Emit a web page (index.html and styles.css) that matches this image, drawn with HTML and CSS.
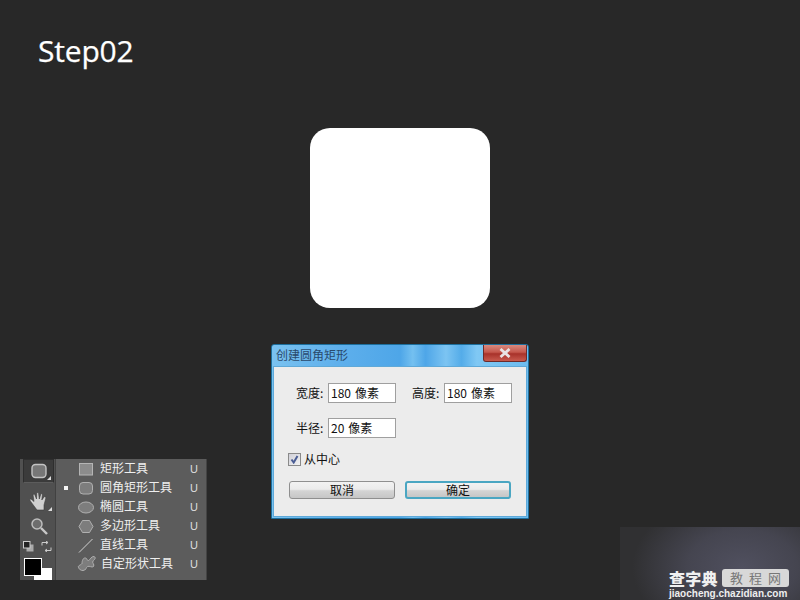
FILE: index.html
```html
<!DOCTYPE html>
<html lang="zh">
<head>
<meta charset="utf-8">
<title>Step02</title>
<link rel="stylesheet" href="styles.css">
</head>
<body>
<main class="canvas">
  <h1 class="step">Step02</h1>
  <div class="rounded"></div>

  <section class="dialog">
    <header class="titlebar">
      <span class="title">创建圆角矩形</span>
      <span class="close"><svg width="12" height="10" viewBox="0 0 12 10"><path d="M1.500 1L10.500 9M10.500 1L1.500 9" stroke="#e8e4e4" stroke-width="2.800" fill="none"/></svg></span>
    </header>
    <div class="body">
      <div class="row">
        <label class="lbl">宽度:</label><span class="input">180 像素</span>
        <label class="lbl lbl2">高度:</label><span class="input">180 像素</span>
      </div>
      <div class="row row-r">
        <label class="lbl">半径:</label><span class="input">20 像素</span>
      </div>
      <div class="check">
        <span class="box"><svg width="9" height="9" viewBox="0 0 9 9"><path d="M1.500 4.500L3.700 7.500L7.500 1" stroke="#4a5d94" stroke-width="2" fill="none"/></svg></span>
        <span>从中心</span>
      </div>
      <div class="buttons">
        <span class="btn">取消</span>
        <span class="btn btn-main">确定</span>
      </div>
    </div>
  </section>

  <section class="tools">
    <div class="toolbar">
      <div class="tool tool-active">
        <svg width="18" height="16" viewBox="0 0 18 16"><rect x="2" y="1.500" width="14" height="13" rx="3.500" fill="#777" stroke="#c4c4c4" stroke-width="1.400"/></svg>
        <i class="corner"></i>
      </div>
      <div class="tool tool-hand">
        <svg width="22" height="21" viewBox="0 0 22 21"><path d="M9 20L3 12L1.500 9.500L3 9L6 11.500L5 4.500L6.500 4L8.500 9L8.800 2.500L10.500 2.500L11.300 9L13 3.500L14.500 4L13.800 10L16.500 6.500L18 7.500L16 15V20Z" fill="#cfcfcf" stroke="#3a3a3a" stroke-width=".6"/></svg>
        <i class="corner"></i>
      </div>
      <div class="tool tool-zoom">
        <svg width="18" height="18" viewBox="0 0 18 18"><circle cx="7" cy="7" r="5" fill="#6d6d6d" stroke="#bdbdbd" stroke-width="1.500"/><path d="M11 11L17 17" stroke="#c8c8c8" stroke-width="2.400"/></svg>
      </div>
      <div class="mini">
        <svg width="11" height="11" viewBox="0 0 11 11"><rect x="3.500" y="3.500" width="7" height="7" fill="#aaa"/><rect x=".5" y=".5" width="6.500" height="6.500" fill="#222" stroke="#ccc"/></svg>
        <svg width="11" height="11" viewBox="0 0 11 11"><path d="M1 4.500V1.500H6.500M5 0L7 1.500L5 3M10 6.500V9.500H4.500M6 8L4 9.500L6 11" stroke="#ccc" fill="none"/></svg>
      </div>
      <div class="swatches">
        <span class="bg-swatch"></span>
        <span class="fg-swatch"></span>
      </div>
    </div>
    <ul class="menu">
      <li class="item"><span class="dot"></span><svg class="ico" width="17" height="15" viewBox="0 0 17 15"><rect x="1.500" y="1.500" width="13" height="11.500" fill="#8c8c8c" stroke="#b5b5b5"/></svg><span class="name">矩形工具</span><span class="key">U</span></li>
      <li class="item"><span class="dot on"></span><svg class="ico" width="17" height="15" viewBox="0 0 17 15"><rect x="1.500" y="1.500" width="13" height="11.500" rx="3.500" fill="#7d7d7d" stroke="#b0b0b0"/></svg><span class="name">圆角矩形工具</span><span class="key">U</span></li>
      <li class="item"><span class="dot"></span><svg class="ico" width="17" height="15" viewBox="0 0 17 15"><ellipse cx="8" cy="7.500" rx="7.500" ry="5.500" fill="#7d7d7d" stroke="#b0b0b0"/></svg><span class="name">椭圆工具</span><span class="key">U</span></li>
      <li class="item"><span class="dot"></span><svg class="ico" width="17" height="15" viewBox="0 0 17 15"><path d="M4.500 1.500H11.500L15 7.500L11.500 13.500H4.500L1 7.500Z" fill="#7d7d7d" stroke="#b0b0b0"/></svg><span class="name">多边形工具</span><span class="key">U</span></li>
      <li class="item"><span class="dot"></span><svg class="ico" width="17" height="15" viewBox="0 0 17 15"><path d="M1 14.500L14.500 1" stroke="#d0d0d0" fill="none"/></svg><span class="name">直线工具</span><span class="key">U</span></li>
      <li class="item item-last"><span class="dot"></span><svg class="ico" width="20" height="17" viewBox="0 0 20 17"><path d="M1.500 12.500C.5 10.500 4 10 5 8.500C5 6 6 2.500 8.500 3C10.500 3.500 10 6 11.500 5.500C13 5 14.500 1 17 1.500C19.500 2.500 17.500 5 16 6C14.500 7.500 18 9.500 16.500 11.500C15 13 12.500 10.500 10.500 11.500C9 12.500 9 15.500 6 15.500C3.500 15.500 2.500 14.500 1.500 12.500Z" fill="#7d7d7d" stroke="#b0b0b0"/></svg><span class="name">自定形状工具</span><span class="key">U</span></li>
    </ul>
  </section>

  <aside class="mark">
    <div class="mark-top">
      <span class="mark-logo">查字典</span>
      <span class="mark-tag"><span>教</span><span>程</span><span>网</span></span>
    </div>
    <div class="mark-url">jiaocheng.chazidian.com</div>
  </aside>
</main>
</body>
</html>
```
FILE: styles.css
```css
* { box-sizing: border-box; margin: 0; padding: 0; }
html, body { width: 800px; height: 600px; overflow: hidden; background: #282828; }
body { font-family: "Noto Sans CJK SC", "Liberation Sans", sans-serif; }
.canvas { position: relative; width: 800px; height: 600px; background: #282828; }

.step {
  position: absolute; left: 38px; top: 31px;
  font: 400 30px/40px "Open Sans", "Noto Sans", sans-serif;
  color: #fff; letter-spacing: -.2px; -webkit-text-stroke: .25px #fff;
}
.rounded {
  position: absolute; left: 310px; top: 128px;
  width: 180px; height: 180px; border-radius: 20px; background: #fff;
}

/* dialog */
.dialog {
  position: absolute; left: 271px; top: 344px; width: 258px; height: 175px;
  border: 1px solid #1d6f9d; border-radius: 3px 3px 0 0;
  background: linear-gradient(90deg, #7ac2f0 0, #5fb0ec 25%, #4ea6e8 50%, #74c0f0 55%, #4ea6e8 60%, #7cc4f2 68%, #54ace9 74%, #80c8f4 80%, #6cbcf0 100%);
  display: flex; flex-direction: column; padding: 0 1px 1px;
}
.titlebar { height: 21px; display: flex; justify-content: space-between; padding-left: 3px; flex: none; }
.title { font-size: 12px; line-height: 20px; color: #2a4a6c; }
.close {
  width: 44px; height: 17px;
  display: flex; align-items: center; justify-content: center;
  background: linear-gradient(#d98a80 0, #c5574c 45%, #a8322a 55%, #c85a4e 100%);
  border: 1px solid #6d2a2a; border-top: 0; border-radius: 0 0 3px 3px;
}
.body { flex: 1; background: #ececec; border: 1px solid #5fa9d8; padding: 16px 0 0 22px; font-size: 12px; color: #111; }
.row { display: flex; align-items: center; height: 20px; }
.row-r { margin-top: 15px; }
.lbl { width: 32px; line-height: 20px; }
.lbl2 { margin-left: 16px; }
.input {
  width: 68px; height: 20px; border: 1px solid #9f9f9f; background: #fff;
  padding-left: 2px; line-height: 18px; word-spacing: 1.300px;
}
.check { display: flex; align-items: center; gap: 3px; margin-top: 14px; margin-left: -8px; height: 14px; line-height: 14px; }
.box {
  width: 13px; height: 13px; border: 1px solid #8a8a8a; background: linear-gradient(135deg, #d0d0d8, #f2f2f2);
  display: flex; align-items: center; justify-content: center;
}
.buttons { display: flex; gap: 10px; margin-top: 15px; margin-left: -7px; }
.btn {
  width: 106px; height: 18px; border: 1px solid #8f8f8f; border-radius: 3px;
  background: linear-gradient(#f2f2f2 0, #ebebeb 45%, #d4d4d4 55%, #c6c6c6 100%);
  text-align: center; line-height: 16px; font-size: 12px; color: #111;
}
.btn-main { border: 2px solid #4aa6c2; line-height: 14px; }

/* tool flyout */
.tools {
  position: absolute; left: 20px; top: 459px; width: 187px; height: 121px;
  display: flex; background: #4f4f4f; border-right: 1px solid #444;
}
.toolbar { width: 36px; flex: none; display: flex; flex-direction: column; align-items: flex-start; background: #505050; border-right: 1px solid #414141; padding-left: 3px; }
.tool { position: relative; width: 31px; height: 24px; display: flex; align-items: center; justify-content: center; flex: none; }
.tool-active { background: #3b3b3b; border: 1px solid #2e2e2e; border-bottom: 1px solid #5c5c5c; }
.tool-hand { margin-top: 4px; height: 26px; }
.tool-zoom { margin-top: 2px; height: 22px; }
.corner { position: absolute; right: 2px; bottom: 2px; border-left: 4px solid transparent; border-bottom: 4px solid #ddd; }
.mini { width: 31px; display: flex; justify-content: space-between; padding-right: 2px; margin-top: 4px; flex: none; }
.swatches { position: relative; width: 31px; height: 22px; margin-top: 6px; flex: none; }
.bg-swatch { position: absolute; left: 11px; top: 10px; width: 18px; height: 12px; background: #fff; }
.fg-swatch { position: absolute; left: 1px; top: 0; width: 18px; height: 18px; background: #000; border: 1px solid #fff; }

.menu { flex: 1; list-style: none; background: #5c5c5c; }
.item { display: flex; align-items: center; height: 19px; color: #efefef; font-size: 12px; }
.dot { width: 4px; height: 4px; margin-left: 8px; margin-right: 10px; flex: none; }
.dot.on { background: #f4f4f4; }
.ico { flex: none; margin-top: 2px; }
.name { margin-left: 5px; flex: 1; line-height: 17px; padding-bottom: 2px; }
.key { width: 16px; font: 11px "Liberation Sans", sans-serif; color: #ddd; flex: none; }
.item-last .ico { margin-left: -1px; margin-top: 0; }
.item-last .name { margin-left: 4px; }

/* watermark */
.mark {
  position: absolute; left: 620px; top: 527px; width: 180px; height: 73px;
  background: radial-gradient(ellipse 110px 75px at 68% 55%, #50505f 0, #454550 50%, #303032 100%);
  padding: 42px 0 0 49px; color: #eee;
}
.mark-top { display: flex; align-items: center; gap: 4px; }
.mark-logo { font-size: 16px; font-weight: 900; line-height: 17px; color: #f0f0f0; letter-spacing: .3px; }
.mark-tag {
  width: 67px; height: 18px; border-radius: 3px; background: #d8d8d8; color: #777;
  font-size: 13px; line-height: 18px; display: flex; justify-content: space-around; padding: 0 5px;
}
.mark-url { font: 700 10px/12px "Liberation Sans", sans-serif; margin-top: 1px; color: #eee; white-space: nowrap; }
```
